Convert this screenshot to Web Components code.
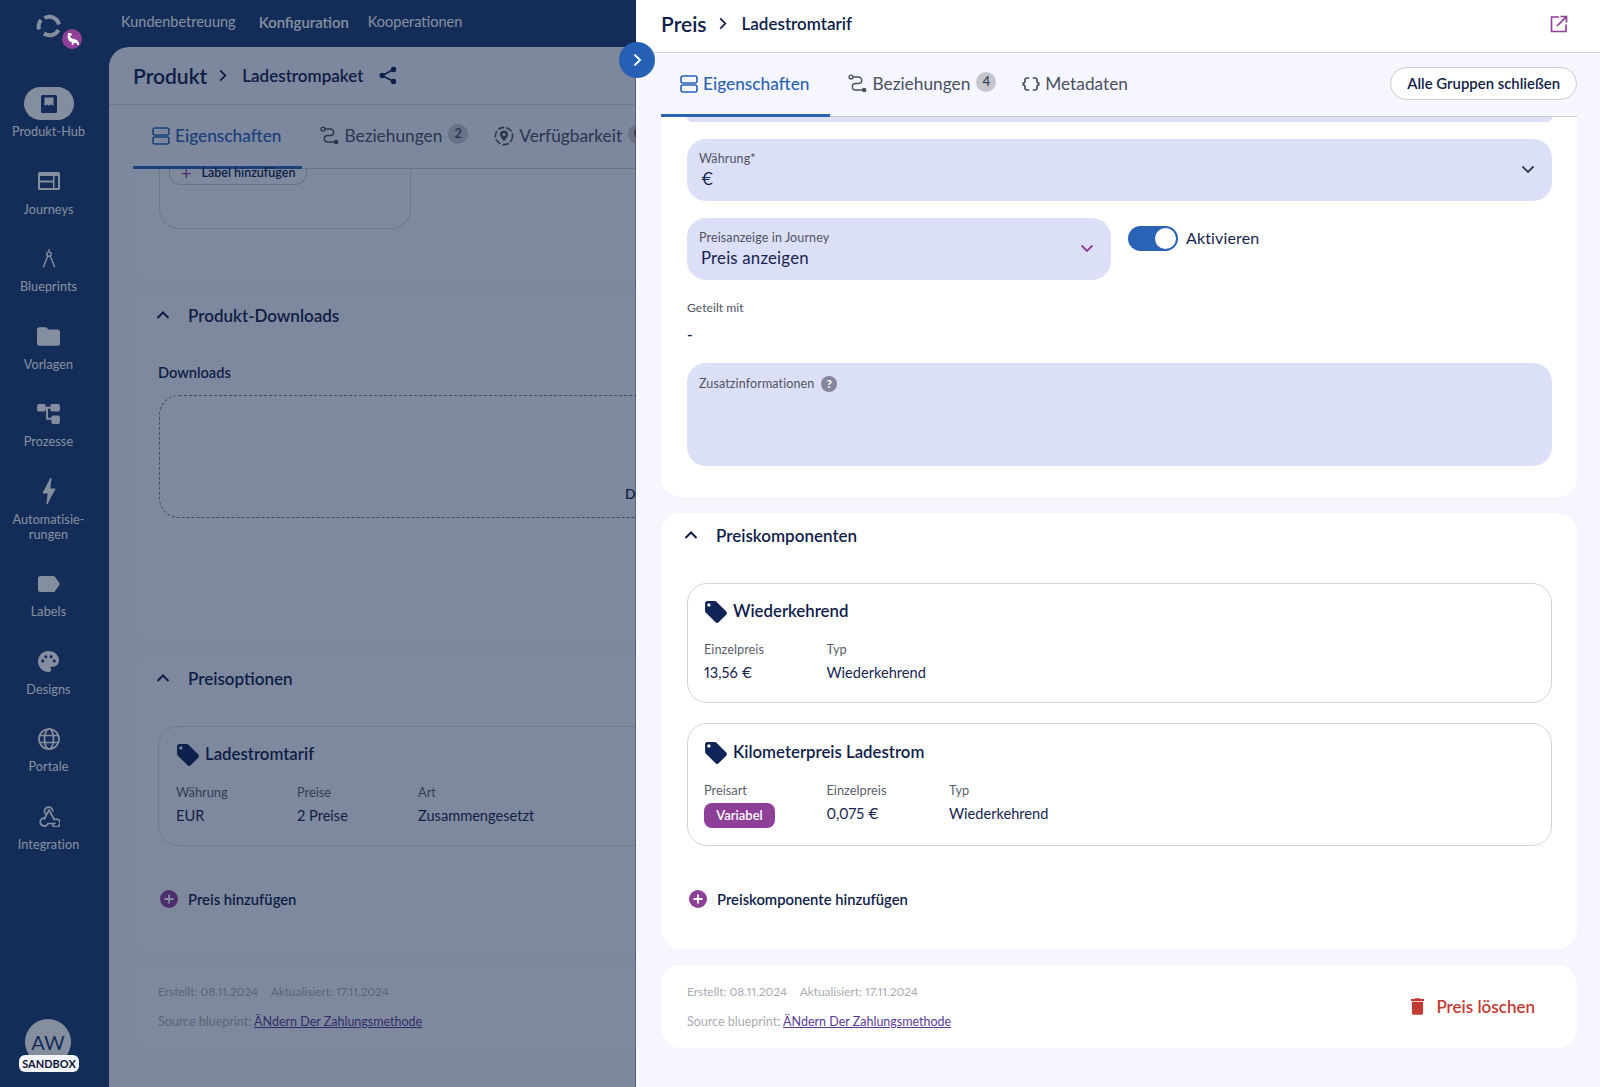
<!DOCTYPE html>
<html lang="de">
<head>
<meta charset="utf-8">
<title>Preis</title>
<style>
  html, body { margin: 0; height: 100%; overflow: hidden; background: #f5f6ff; }
  body { font-family: Lato, "Liberation Sans", sans-serif; color: #0f1d4a; font-variant-numeric: proportional-nums; }
</style>
</head>
<body>
<app-shell>
  <app-sidebar slot="side"></app-sidebar>
  <top-nav slot="top"></top-nav>
  <product-page slot="page"></product-page>
</app-shell>
<dim-layer></dim-layer>
<detail-drawer></detail-drawer>

<script>
const ICONS = {
  panels: '<svg viewBox="0 0 18 18" fill="none" stroke="currentColor" stroke-width="1.6"><rect x="1" y="1" width="16" height="7" rx="2"/><rect x="1" y="10" width="16" height="7" rx="2"/></svg>',
  route: '<svg viewBox="0 0 20 20" fill="none" stroke="currentColor" stroke-width="1.5"><circle cx="3.2" cy="3.2" r="2"/><path d="M5.2 3.2H11a3.4 3.4 0 0 1 0 6.8H8a3.4 3.4 0 0 0 0 6.8h8"/><circle cx="17" cy="16.8" r="2.4" fill="currentColor" stroke="none"/></svg>',
  braces: '<svg viewBox="1.5 3.500 21 17" fill="currentColor"><path d="M4 7v2c0 .55-.45 1-1 1H2v4h1c.55 0 1 .45 1 1v2c0 1.65 1.35 3 3 3h3v-2H7c-.55 0-1-.45-1-1v-2c0-1.3-.84-2.42-2-2.83v-.34C5.16 11.42 6 10.3 6 9V7c0-.55.45-1 1-1h3V4H7C5.35 4 4 5.35 4 7zM21 10c-.55 0-1-.45-1-1V7c0-1.65-1.35-3-3-3h-3v2h3c.55 0 1 .45 1 1v2c0 1.3.84 2.42 2 2.83v.34c-1.16.41-2 1.52-2 2.83v2c0 .55-.45 1-1 1h-3v2h3c1.65 0 3-1.35 3-3v-2c0-.55.45-1 1-1h1v-4h-1z"/></svg>',
  radar: '<svg viewBox="0 0 20 20" fill="none" stroke="currentColor" stroke-width="1.6"><circle cx="10" cy="10" r="8.6" stroke-dasharray="6.5 2"/><path fill="currentColor" stroke="none" d="M10 4.6a4 4 0 0 0-4 4c0 2.8 4 6.6 4 6.6s4-3.8 4-6.6a4 4 0 0 0-4-4zm0 5.5a1.5 1.5 0 1 1 0-3 1.5 1.5 0 0 1 0 3z"/></svg>',
  share: '<svg viewBox="0 0 18 18" fill="currentColor"><circle cx="14.5" cy="3" r="2.7"/><circle cx="3.2" cy="9" r="2.7"/><circle cx="14.5" cy="15" r="2.7"/><path d="M3.2 9 14.5 3M3.2 9l11.3 6" stroke="currentColor" stroke-width="1.7" fill="none"/></svg>',
  tag: '<svg viewBox="1 1 22 22" fill="currentColor"><path d="M21.41 11.58l-9-9C12.05 2.22 11.55 2 11 2H4c-1.1 0-2 .9-2 2v7c0 .55.22 1.05.59 1.42l9 9c.36.36.86.58 1.41.58.55 0 1.05-.22 1.41-.59l7-7c.37-.36.59-.86.59-1.41 0-.55-.23-1.06-.59-1.42zM5.5 7C4.67 7 4 6.33 4 5.5S4.67 4 5.5 4 7 4.67 7 5.5 6.33 7 5.5 7z"/></svg>',
  up: '<svg viewBox="0 0 14 14" fill="none" stroke="currentColor" stroke-width="2"><path d="M1.5 10 7 4.5 12.5 10"/></svg>',
  down: '<svg viewBox="0 0 14 14" fill="none" stroke="currentColor" stroke-width="1.8"><path d="M1.5 4.5 7 10l5.500-5.500"/></svg>',
  right: '<svg viewBox="0 0 14 14" fill="none" stroke="currentColor" stroke-width="1.9"><path d="M4.500 1.500 10 7l-5.500 5.500"/></svg>',
  open: '<svg viewBox="0 0 18 18" fill="none" stroke="currentColor" stroke-width="1.7"><path d="M9 2H1.500v14.500H16V9.500"/><path d="M7 11 16.200 1.800M10.500 1.500h6v6" /></svg>',
  trash: '<svg viewBox="5 3 14 18" fill="currentColor"><path d="M6 19c0 1.100.9 2 2 2h8c1.100 0 2-.9 2-2V7H6v12zM19 4h-3.500l-1-1h-5l-1 1H5v2h14V4z"/></svg>',
  hub: '<svg viewBox="0 0 20 20" fill="currentColor"><path fill-rule="evenodd" d="M3.500 1h13A1.500 1.500 0 0 1 18 2.500v15a1.500 1.500 0 0 1-1.500 1.500h-13A1.500 1.500 0 0 1 2 17.500v-15A1.500 1.500 0 0 1 3.500 1zM5.500 3.500v8.500l2.500-1.600 2 1.300 2-1.300 2.500 1.600V3.500z" /></svg>',
  journeys: '<svg viewBox="0 0 22 18" fill="currentColor"><path fill-rule="evenodd" d="M1.500 0h19A1.500 1.500 0 0 1 22 1.500v15a1.500 1.500 0 0 1-1.500 1.500h-19A1.500 1.500 0 0 1 0 16.500v-15A1.500 1.500 0 0 1 1.500 0zM2 4v4.500h13V4zM16.500 4v12H20V4zM2 10.500V16h13v-5.500z"/></svg>',
  compass: '<svg viewBox="0 0 16 22" fill="none" stroke="currentColor" stroke-width="1.600"><path d="M8 0v3"/><circle cx="8" cy="6" r="2.500"/><path d="M6.500 8.500 1.500 21M9.500 8.500l5 12.500"/></svg>',
  folder: '<svg viewBox="2 4 20 16" fill="currentColor"><path d="M10 4H4c-1.100 0-2 .9-2 2v12c0 1.100.9 2 2 2h16c1.100 0 2-.9 2-2V8c0-1.100-.9-2-2-2h-8l-2-2z"/></svg>',
  process: '<svg viewBox="0 0 24 21" fill="currentColor"><rect x="0" y="0" width="9" height="8" rx="2"/><rect x="14" y="0" width="10" height="8" rx="2"/><rect x="15" y="12" width="9" height="9" rx="2"/><path d="M8 3h7v2h-3.500v9.500H16v2h-6.500V5H8z"/></svg>',
  bolt: '<svg viewBox="6.500 2 11 20" fill="currentColor"><path d="M11 22h-1l1-8H7.500c-.58 0-.57-.32-.38-.66.19-.34.05-.08.07-.12C8.480 10.940 10.420 7.040 13 2h1l-1 8h3.500c.49 0 .56.33.47.51l-.07.15C12.960 17.550 11 22 11 22z"/></svg>',
  label: '<svg viewBox="3 5 19 14" fill="currentColor"><path d="M17.630 5.840C17.270 5.330 16.670 5 16 5L5 5.010C3.900 5.010 3 5.900 3 7v10c0 1.100.9 1.990 2 1.990L16 19c.67 0 1.270-.33 1.630-.84L22 12l-4.370-6.160z"/></svg>',
  palette: '<svg viewBox="2 2 20 20" fill="currentColor"><path d="M12 2C6.490 2 2 6.490 2 12s4.490 10 10 10c1.380 0 2.500-1.120 2.500-2.500 0-.61-.23-1.200-.64-1.670-.08-.1-.13-.21-.13-.33 0-.28.22-.5.5-.5H16c3.310 0 6-2.690 6-6 0-4.960-4.490-9-10-9zm-5.500 11c-.83 0-1.500-.67-1.500-1.500S5.670 10 6.500 10s1.500.67 1.500 1.500S7.330 13 6.500 13zm3-4C8.670 9 8 8.330 8 7.500S8.670 6 9.500 6s1.500.67 1.500 1.500S10.330 9 9.500 9zm5 0c-.83 0-1.500-.67-1.500-1.500S13.670 6 14.500 6s1.500.67 1.500 1.500S15.330 9 14.500 9zm3 4c-.83 0-1.500-.67-1.500-1.500s.67-1.500 1.500-1.500 1.500.67 1.500 1.500-.67 1.500-1.500 1.500z"/></svg>',
  globe: '<svg viewBox="0 0 22 22" fill="none" stroke="currentColor" stroke-width="1.700"><circle cx="11" cy="11" r="10"/><ellipse cx="11" cy="11" rx="4.500" ry="10"/><path d="M1.800 7.500h18.400M1.800 14.500h18.400"/></svg>',
  webhook: '<svg viewBox="0 0 22 22" fill="none" stroke="currentColor" stroke-width="1.700" stroke-linecap="round"><path d="M7.200 8.800A4.200 4.200 0 1 1 14.800 6"/><path d="M11 4.800 6.300 14"/><path d="M6.300 13a4 4 0 1 0 3.700 5.500h7"/><path d="M11.500 6l4.700 8.500a4 4 0 1 1-1.500 5.500"/></svg>'
};

// shared shadow setup
class Shadowed extends HTMLElement {
  constructor() {
    super();
    this.attachShadow({ mode: "open" });
  }
  render(css, html) {
    this.shadowRoot.innerHTML = `<style>:host{box-sizing:border-box} *{box-sizing:border-box} svg{display:block;width:100%;height:100%} ${css}</style>${html}`;
  }
}

class AppShell extends Shadowed {
  constructor() {
    super();
    this.render(`
      :host { display: flex; width: 1600px; height: 1087px; overflow: hidden; background: #1b3a71; }
      .main { flex: 1; display: flex; flex-direction: column; min-width: 0; }
    `, `<slot name="side"></slot><div class="main"><slot name="top"></slot><slot name="page"></slot></div>`);
  }
}

class SideItem extends Shadowed {
  constructor() {
    super();
    this.render(`
      :host { display: flex; flex-direction: column; align-items: center; color: #fff; font-size: 12.600px; line-height: 15px; text-align: center; letter-spacing: .1px; }
      .ico { width: 50px; height: 33px; border-radius: 17px; display: flex; align-items: center; justify-content: center; margin-bottom: 4px; }
      :host([active]) .ico { background: #fff; color: #1b3a71; }
    `, `<div class="ico"><slot name="icon"></slot></div><slot></slot>`);
  }
}

class AppSidebar extends Shadowed {
  constructor() {
    super();
    const item = (icon, w, h, label, active) =>
      `<side-item ${active ? "active" : ""}><span slot="icon" style="display:block;width:${w}px;height:${h}px">${ICONS[icon]}</span>${label}</side-item>`;
    this.render(`
      :host { display: block; position: relative; flex: 0 0 109px; width: 109px; height: 1087px; background: #1b3a71; }
      nav { display: flex; flex-direction: column; gap: 25.550px; width: 97px; padding-top: 87px; }
      .logo { position: absolute; left: 35px; top: 12px; width: 28px; height: 27px; color: #fff; }
      .badge { position: absolute; z-index: 10; left: 62px; top: 29px; width: 20px; height: 20px; border-radius: 50%; background: #8e3f98; color: #fff; padding: 3px; }
      .avatar { position: absolute; left: 25px; top: 1019px; width: 46px; height: 46px; border-radius: 50%; background: #fff; color: #1b3a71; font-size: 20px; text-align: center; line-height: 46px; }
      .sandbox { position: absolute; z-index: 10; left: 19px; top: 1055px; width: 60px; height: 17px; border-radius: 6px; background: #f4f6ff; color: #0b1430; font-size: 11px; font-weight: 700; line-height: 17px; text-align: center; }
    `, `
      <div class="logo"><svg viewBox="0 0 28 27" fill="none" stroke="currentColor" stroke-width="4"><path d="M9.500 6A10 10 0 0 1 24 12.500"/><path d="M4 17.500A10.500 10.500 0 0 1 6 8"/><path d="M9 21.500A10 10 0 0 0 23.500 18"/></svg></div>
      <div class="badge"><svg viewBox="0 0 14 14" fill="currentColor"><path d="M3 1h3l1 2-2 1 1 2 3 1 3 1 2 3v2h-1.500l-1-2H9l-1 2H6.500l.5-2.500L4 9 2.500 5z"/></svg></div>
      <nav>
        ${item("hub", 20, 20, "Produkt-Hub", true)}
        ${item("journeys", 22, 18, "Journeys")}
        ${item("compass", 14, 21, "Blueprints")}
        ${item("folder", 23, 19, "Vorlagen")}
        ${item("process", 23, 20, "Prozesse")}
        ${item("bolt", 16, 26, "Automatisie-<br>rungen")}
        ${item("label", 22, 18, "Labels")}
        ${item("palette", 21, 21, "Designs")}
        ${item("globe", 22, 22, "Portale")}
        ${item("webhook", 22, 22, "Integration")}
      </nav>
      <div class="avatar">AW</div>
      <div class="sandbox">SANDBOX</div>
    `);
  }
}

class TopNav extends Shadowed {
  constructor() {
    super();
    this.render(`
      :host { display: flex; flex: 0 0 47px; align-items: center; gap: 22px; padding: 0 0 4px 12px; color: #fff; font-size: 14.500px; }
      b { font-weight: 600; font-size: 14.900px; margin: 0 -3px 0 1px; }
    `, `<span>Kundenbetreuung</span><b>Konfiguration</b><span>Kooperationen</span>`);
  }
}

class CrumbHead extends Shadowed {
  constructor() {
    super();
    this.render(`
      :host { display: flex; align-items: center; color: #0f1d4a; background: #fff; border-bottom: 1.500px solid #d3d5dc; padding-left: var(--pad, 25px); padding-bottom: var(--pb, 0); height: var(--h, 53px); }
      .main { font-size: 21px; font-weight: 600; }
      .sep { width: 13px; height: 13px; margin: 0 13px 0 9px; flex: none; }
      .sub { font-size: 17px; font-weight: 600; }
      ::slotted(*) { margin-left: 16px; }
    `, `<span class="main">${this.getAttribute("main")}</span><span class="sep">${ICONS.right}</span><span class="sub">${this.getAttribute("sub")}</span><slot></slot>`);
  }
}

class TabBar extends Shadowed {
  constructor() {
    super();
    this.render(`
      :host { display: flex; align-items: stretch; height: 64px; border-bottom: 1.500px solid #c6c9d6; background: #f5f6ff; }
      .end { margin-left: auto; align-self: center; margin-bottom: 2px; }
    `, `<slot></slot><div class="end"><slot name="end"></slot></div>`);
  }
}

class TabItem extends Shadowed {
  constructor() {
    super();
    const count = this.getAttribute("count");
    const icon = this.getAttribute("icon");
    this.render(`
      :host { display: flex; align-items: center; gap: 5px; padding: 0 7px 0 19px; height: 64px; color: #4a505f; font-size: 17.300px; margin-bottom: -1.500px; border-bottom: 3px solid transparent; }
      :host([active]) { color: #2a62b5; font-weight: 500; padding-right: 21px; border-bottom-color: #2a62b5; }
      .i { width: 18px; height: 18px; flex: none; }
      .i.route { width: 19px; height: 19px; margin-left: -1px; }
      .i.radar { width: 20px; height: 20px; }
      .n { width: 20px; height: 20px; border-radius: 50%; background: #c5c6cd; color: #404553; font-size: 13px; text-align: center; line-height: 19px; margin: -3px 0 0 1px; font-weight: 600; }
    `, `<span class="i ${icon}">${ICONS[icon]}</span><span><slot></slot></span>${count ? `<span class="n">${count}</span>` : ""}`);
  }
}

class SectionCard extends Shadowed {
  constructor() {
    super();
    const title = this.getAttribute("title");
    this.render(`
      :host { display: block; background: var(--card, #fff); border-radius: 20px; padding: 0 25px 0 var(--inset, 25px); overflow: hidden; }
      header { display: flex; align-items: center; height: 46px; padding-bottom: 2px; margin-left: calc(23px - var(--inset, 25px)); gap: 18px; font-size: 17px; font-weight: 600; color: #0f1d4a; }
      .c { width: 14px; height: 14px; }
    `, `${title ? `<header><span class="c">${ICONS.up}</span>${title}</header>` : ""}<slot></slot>`);
  }
}

class PriceCard extends Shadowed {
  constructor() {
    super();
    this.render(`
      :host { display: block; border: 1.500px solid #d2d4da; border-radius: 20px; padding: 14px 17px 19px var(--pl, 17px); background: var(--card, #fff); }
      .h { display: flex; align-items: center; gap: 5px; height: 24px; font-size: 16.800px; font-weight: 600; color: #0f1d4a; }
      .tag { width: 24px; height: 24px; color: #0f2558; margin-top: 4px; }
      .g { display: grid; grid-auto-flow: column; grid-auto-columns: var(--col, 122px); justify-content: start; margin-top: 19px; }
    `, `<div class="h"><span class="tag">${ICONS.tag}</span>${this.getAttribute("title")}</div><div class="g"><slot></slot></div>`);
  }
}

class PriceCell extends Shadowed {
  constructor() {
    super();
    this.render(`
      :host { display: block; }
      .l { font-size: 12.800px; line-height: 16px; color: #5a5f6b; }
      .v { font-size: 14.600px; line-height: 20px; color: #16244f; margin-top: 6px; }
      ::slotted(*) { margin-top: 5px; }
    `, `<div class="l">${this.getAttribute("label")}</div>${this.hasAttribute("value") ? `<div class="v">${this.getAttribute("value")}</div>` : `<slot></slot>`}`);
  }
}

class ChipTag extends Shadowed {
  constructor() {
    super();
    this.render(`
      :host { display: inline-block; width: 71px; height: 25px; border-radius: 8px; background: #8e3f98; color: #fff; font-size: 13px; font-weight: 600; line-height: 25px; text-align: center; }
    `, `<slot></slot>`);
  }
}

class AddLink extends Shadowed {
  constructor() {
    super();
    this.render(`
      :host { display: flex; align-items: center; gap: 10px; margin-left: 2px; height: 18px; font-size: 14.800px; font-weight: 600; color: #0f1d4a; }
      svg { width: 18px; height: 18px; }
    `, `<svg viewBox="0 0 18 18"><circle cx="9" cy="9" r="9" fill="#8e3f98"/><path d="M9 4.500v9M4.500 9h9" stroke="#fff" stroke-width="1.800"/></svg><slot></slot>`);
  }
}

class MetaFooter extends Shadowed {
  constructor() {
    super();
    this.render(`
      :host { display: flex; align-items: center; justify-content: space-between; background: var(--card, #fff); border-radius: 20px; padding: 0 42px 0 var(--inset, 25px); height: 83px; color: #a8abb3; font-size: 12.500px; }
      p { margin: 0; line-height: 16px; }
      p + p { margin-top: 14px; }
      .d { font-size: 11.900px; }
      .a { margin-left: 12.500px; }
      a { color: #5a3a95; text-decoration: underline; }
    `, `<div><p class="d">Erstellt: 08.11.2024<span class="a">Aktualisiert: 17.11.2024</span></p><p>Source blueprint: <a href="#">ÄNdern Der Zahlungsmethode</a></p></div><slot></slot>`);
  }
}

class FormField extends Shadowed {
  constructor() {
    super();
    const value = this.getAttribute("value");
    const caret = this.getAttribute("caret");
    this.render(`
      :host { display: block; position: relative; background: #dbdff8; border-radius: 19px; height: 62px; padding: 12px 12px; }
      .l { display: flex; align-items: center; gap: 7px; font-size: 12.500px; line-height: 16px; color: #50545f; letter-spacing: .12px; }
      .v { font-size: 16.800px; line-height: 22px; margin: 1px 0 0 2px; color: #16244f; letter-spacing: .2px; }
      .c { position: absolute; right: 17px; top: 23px; width: 14px; height: 14px; color: ${caret || "#33394f"}; }
      .q { width: 16px; height: 16px; border-radius: 50%; background: #84889a; color: #fff; font-size: 12px; font-weight: 700; text-align: center; line-height: 16px; }
    `, `<div class="l">${this.getAttribute("label")}${this.hasAttribute("help") ? `<span class="q">?</span>` : ""}</div>
      ${value ? `<div class="v">${value}</div><span class="c">${ICONS.down}</span>` : ""}`);
  }
}

class ToggleSwitch extends Shadowed {
  constructor() {
    super();
    this.render(`
      :host { display: flex; align-items: flex-start; gap: 8px; font-size: 16px; line-height: 24px; color: #16244f; letter-spacing: .15px; }
      .t { position: relative; width: 50px; height: 25px; border-radius: 13px; background: #2a62b5; }
      .t::after { content: ""; position: absolute; right: 2px; top: 2px; width: 21px; height: 21px; border-radius: 50%; background: #fff; }
    `, `<span class="t"></span><slot></slot>`);
  }
}

class ProductPage extends Shadowed {
  constructor() {
    super();
    this.render(`
      :host { display: flex; flex-direction: column; flex: 1; min-height: 0; background: #eff0fb; border-radius: 20px 0 0 0; overflow: hidden; --card: #f3f4fb; }
      crumb-head { --pad: 24px; --h: 58px; background: transparent; }
      .share { width: 18px; height: 19px; color: #0f2558; }
      tab-bar { margin: 0 0 0 24px; background: transparent; }
      .scroll { flex: 1; min-height: 0; display: flex; flex-direction: column; gap: 16px; padding: 0 23px 0 24px; }
      .s1 { height: 108px; flex: none; overflow: visible; }
      .lbl { width: 252px; height: 60px; margin-left: 1px; border: 1.500px solid #d2d4da; border-top: 0; border-radius: 0 0 20px 20px; padding-left: 9px; }
      .chip { display: flex; align-items: flex-start; gap: 10px; width: 138px; height: 16px; padding-left: 11px; border: 1px solid #c3c6d2; border-top: 0; border-radius: 0 0 12px 12px; background: transparent; font-size: 12.500px; font-weight: 600; line-height: 8px; color: #0f1d4a; }
      .chip i { color: #8e3f98; font-style: normal; font-size: 18px; font-weight: 400; line-height: 8px; }
      .s2 { height: 347px; flex: none; }
      h4 { margin: 24px 0 12px; font-size: 14.600px; line-height: 20px; font-weight: 600; color: #0f1d4a; }
      .drop { height: 123px; margin-left: 1px; border: 1.200px dashed #777c8c; border-radius: 20px; padding: 89px 0 0 465px; font-size: 14px; font-weight: 600; line-height: 18px; color: #0f1d4a; }
      .s3 { height: 293px; flex: none; }
      price-card { --col: 121px; margin-top: 24px; }
      add-link { margin-top: 44px; }
      meta-footer { flex: none; }
    `, `
      <crumb-head main="Produkt" sub="Ladestrompaket"><span class="share">${ICONS.share}</span></crumb-head>
      <tab-bar>
        <tab-item active icon="panels">Eigenschaften</tab-item>
        <tab-item icon="route" count="2">Beziehungen</tab-item>
        <tab-item icon="radar" count="0">Verfügbarkeit</tab-item>
      </tab-bar>
      <div class="scroll">
        <section-card class="s1"><div class="lbl"><div class="chip"><i>+</i>Label hinzufügen</div></div></section-card>
        <section-card class="s2" title="Produkt-Downloads"><h4>Downloads</h4><div class="drop">D</div></section-card>
        <section-card class="s3" title="Preisoptionen">
          <price-card title="Ladestromtarif">
            <price-cell label="Währung" value="EUR"></price-cell>
            <price-cell label="Preise" value="2 Preise"></price-cell>
            <price-cell label="Art" value="Zusammengesetzt"></price-cell>
          </price-card>
          <add-link>Preis hinzufügen</add-link>
        </section-card>
        <meta-footer></meta-footer>
      </div>
    `);
  }
}

class DimLayer extends Shadowed {
  constructor() {
    super();
    this.render(`:host { display: block; position: absolute; inset: 0; z-index: 5; background: rgba(11, 30, 63, .5); }`, ``);
  }
}

class DetailDrawer extends Shadowed {
  constructor() {
    super();
    this.render(`
      :host { display: flex; flex-direction: column; position: absolute; z-index: 6; left: 636px; top: 0; width: 964px; height: 1087px; background: #f5f6ff; box-shadow: -1px 0 0 rgba(20, 30, 70, .35); --inset: 26px; --pl: 16px; }
      .toggle { position: absolute; left: -17px; top: 42px; width: 36px; height: 36px; border-radius: 50%; background: #2560b5; color: #fff; padding: 11px; }
      .ext { margin-right: 32px; width: 18px; height: 18px; color: #8e3f98; }
      crumb-head { --pad: 25px; --h: 53px; --pb: 5px; }
      tab-bar { margin: 0 23px 0 25px; }
      .btn { display: block; height: 33px; padding: 0 16px; border: 1px solid #c9ccd6; border-radius: 17px; background: #fff; font-size: 14.900px; font-weight: 600; line-height: 31px; color: #0f1d4a; }
      .scroll { flex: 1; min-height: 0; display: flex; flex-direction: column; gap: 16px; padding: 0 23px 0 25px; }
      .s1 { height: 380px; flex: none; border-radius: 0 0 20px 20px; }
      .sliver { height: 5px; background: #dbdff8; border-radius: 0 0 18px 18px; margin-bottom: 17px; }
      .row { display: flex; gap: 17px; margin-top: 17px; }
      .row form-field { width: 424px; }
      .shared { margin-top: 20px; font-size: 12.200px; line-height: 16px; color: #50545f; }
      .dash { margin-top: 10px; font-size: 15px; line-height: 16px; font-weight: 600; }
      .zus { height: 103px; margin-top: 21px; padding-top: 13px; }
      .s2 { height: 436px; flex: none; --col: 122.500px; }
      .s2 price-card:first-of-type { margin-top: 24px; }
      .s2 price-card.k { margin-top: 20px; padding-top: 15px; padding-bottom: 17px; }
      add-link { margin-top: 44px; }
      .del { display: flex; align-items: center; gap: 12px; font-size: 17px; font-weight: 600; color: #c33a32; }
      .del span { width: 13px; height: 17px; }
      meta-footer { flex: none; }
    `, `
      <crumb-head main="Preis" sub="Ladestromtarif"><span class="ext" style="margin-left:auto">${ICONS.open}</span></crumb-head>
      <span class="toggle">${ICONS.right}</span>
      <tab-bar>
        <tab-item active icon="panels">Eigenschaften</tab-item>
        <tab-item icon="route" count="4">Beziehungen</tab-item>
        <tab-item icon="braces">Metadaten</tab-item>
        <span slot="end" class="btn">Alle Gruppen schließen</span>
      </tab-bar>
      <div class="scroll">
        <section-card class="s1">
          <div class="sliver"></div>
          <form-field label="Währung*" value="€"></form-field>
          <div class="row">
            <form-field label="Preisanzeige in Journey" value="Preis anzeigen" caret="#8e3f98"></form-field>
            <toggle-switch style="margin-top:8px">Aktivieren</toggle-switch>
          </div>
          <div class="shared">Geteilt mit</div>
          <div class="dash">-</div>
          <form-field class="zus" label="Zusatzinformationen" help></form-field>
        </section-card>
        <section-card class="s2" title="Preiskomponenten">
          <price-card title="Wiederkehrend">
            <price-cell label="Einzelpreis" value="13,56 €"></price-cell>
            <price-cell label="Typ" value="Wiederkehrend"></price-cell>
          </price-card>
          <price-card class="k" title="Kilometerpreis Ladestrom">
            <price-cell label="Preisart"><chip-tag>Variabel</chip-tag></price-cell>
            <price-cell label="Einzelpreis" value="0,075 €"></price-cell>
            <price-cell label="Typ" value="Wiederkehrend"></price-cell>
          </price-card>
          <add-link>Preiskomponente hinzufügen</add-link>
        </section-card>
        <meta-footer><div class="del"><span>${ICONS.trash}</span>Preis löschen</div></meta-footer>
      </div>
    `);
  }
}

customElements.define("side-item", SideItem);
customElements.define("app-sidebar", AppSidebar);
customElements.define("top-nav", TopNav);
customElements.define("crumb-head", CrumbHead);
customElements.define("tab-item", TabItem);
customElements.define("tab-bar", TabBar);
customElements.define("section-card", SectionCard);
customElements.define("price-cell", PriceCell);
customElements.define("price-card", PriceCard);
customElements.define("chip-tag", ChipTag);
customElements.define("add-link", AddLink);
customElements.define("meta-footer", MetaFooter);
customElements.define("form-field", FormField);
customElements.define("toggle-switch", ToggleSwitch);
customElements.define("product-page", ProductPage);
customElements.define("dim-layer", DimLayer);
customElements.define("detail-drawer", DetailDrawer);
customElements.define("app-shell", AppShell);
</script>
</body>
</html>
